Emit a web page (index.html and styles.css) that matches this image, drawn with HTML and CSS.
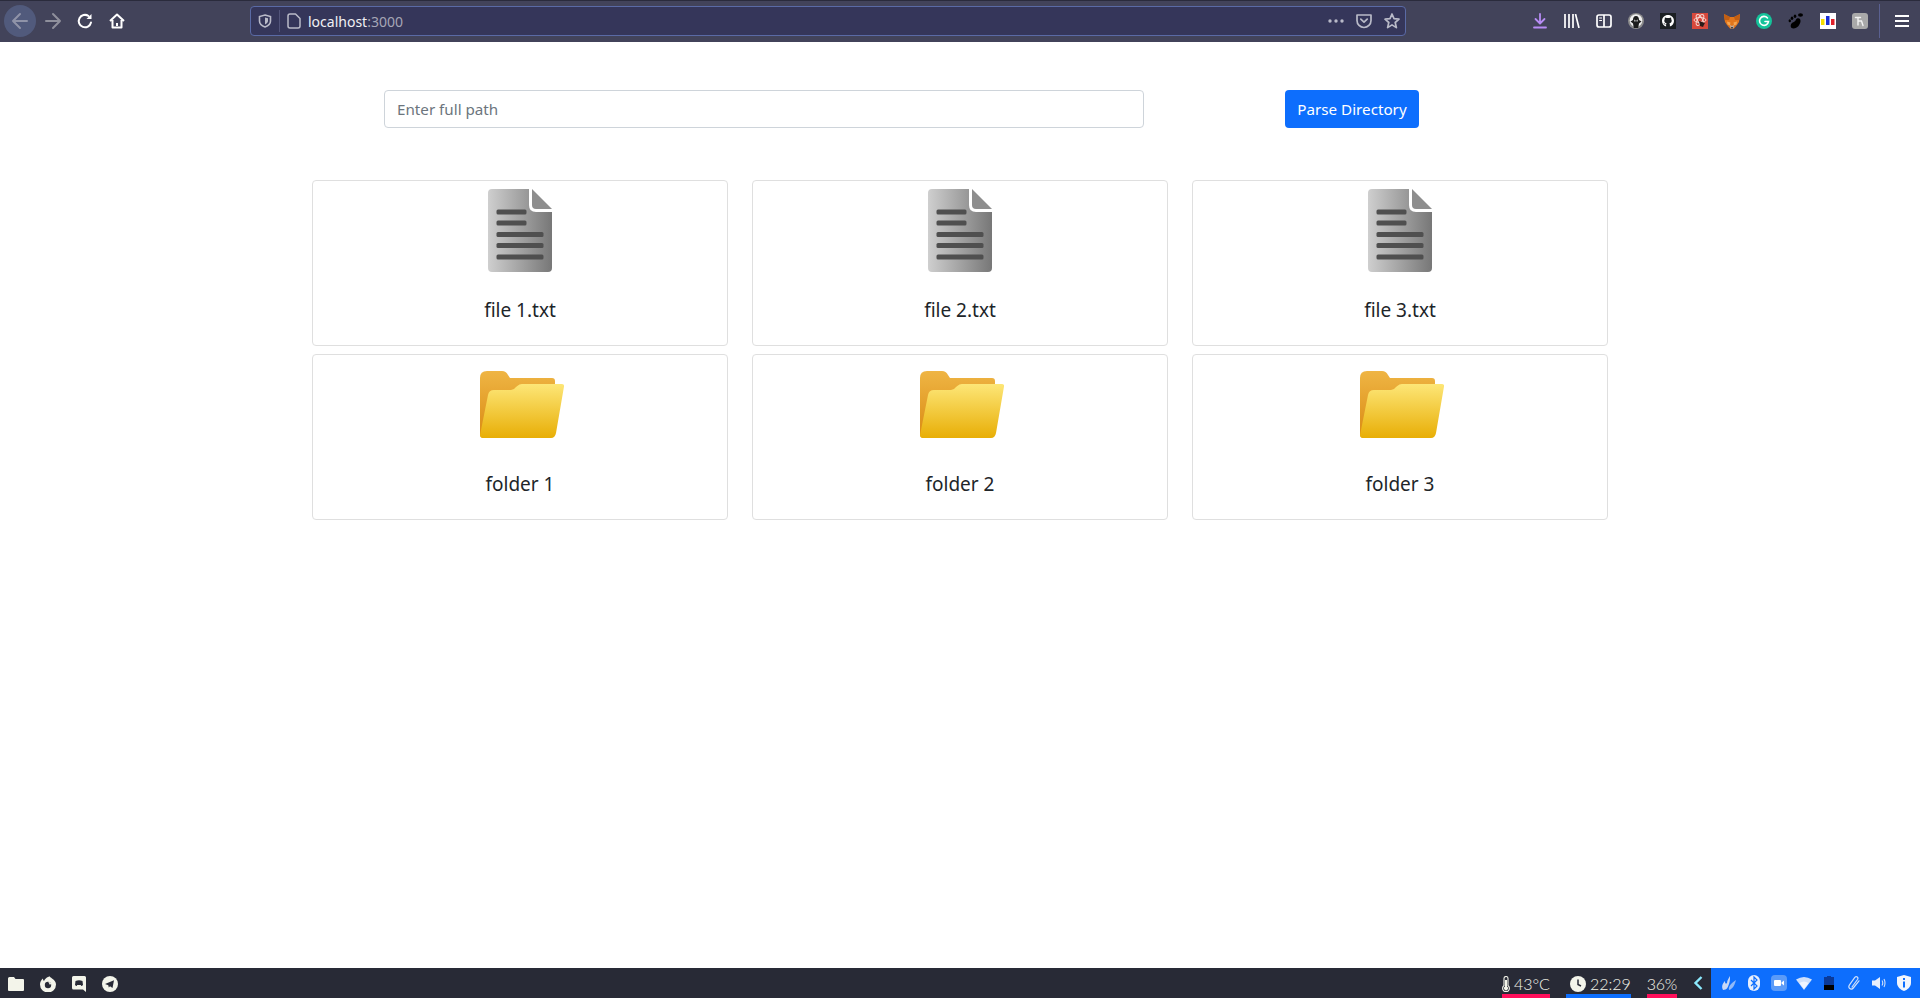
FILE: index.html
```html
<!DOCTYPE html>
<html lang="en">
<head>
    <meta charset="UTF-8">
    <meta name="viewport" content="width=device-width, initial-scale=1.0">
    <title>localhost:3000</title>
    <link rel="stylesheet" href="styles.css">
</head>
<body>

    <svg class="defs" width="0" height="0">
        <defs>
            <linearGradient id="fileBody" x1="0" y1="0" x2="1" y2="0">
                <stop offset="0" stop-color="#cfcfcf"/>
                <stop offset="1" stop-color="#777"/>
            </linearGradient>
            <linearGradient id="folderBack" x1="0" y1="0" x2="0" y2="1">
                <stop offset="0" stop-color="#efb544"/>
                <stop offset="1" stop-color="#d98a12"/>
            </linearGradient>
            <linearGradient id="folderFront" x1="0" y1="0" x2="0" y2="1">
                <stop offset="0" stop-color="#fde677"/>
                <stop offset="1" stop-color="#e8ae06"/>
            </linearGradient>
            <symbol id="file-icon" viewBox="0 0 100 100">
                <g transform="translate(18 8)">
                    <path d="M4 0H41V16Q41 23 48 23H64V79Q64 83 60 83H4Q0 83 0 79V4Q0 0 4 0Z" fill="url(#fileBody)"/>
                    <path d="M44 0L64 20H48Q44 20 44 16Z" fill="#8e8e8e"/>
                    <g fill="#4f4f4f">
                        <rect x="8.500" y="20.500" width="30" height="5" rx="1.500"/>
                        <rect x="8.500" y="31.500" width="30" height="5" rx="1.500"/>
                        <rect x="8.500" y="43" width="47" height="5" rx="1.500"/>
                        <rect x="8.500" y="54" width="47" height="5" rx="1.500"/>
                        <rect x="8.500" y="65.500" width="47" height="5" rx="1.500"/>
                    </g>
                </g>
            </symbol>
            <symbol id="folder-icon" viewBox="0 0 100 100">
                <g transform="translate(10 16)">
                    <path d="M7 0H22Q26 0 28 4L30 7H72Q75 7 75 10V60L4 67Q0 67 0 63V7Q0 0 7 0Z" fill="url(#folderBack)"/>
                    <path d="M0 64L8 24Q9 19 14 19H31Q34 19 36 16L38 14.500Q39 13 42 13H82Q84.500 13 84 15.500L76 62Q75 67 71 67H3Q0 67 0 64Z" fill="url(#folderFront)"/>
                </g>
            </symbol>
        </defs>
    </svg>

    <div class="browser-bar">
        <div class="nav-buttons">
            <span class="nav-btn back">
                <svg width="18" height="18" viewBox="0 0 18 18" fill="none" stroke="#8f93a8" stroke-width="2" stroke-linecap="round" stroke-linejoin="round"><path d="M16 9H2M9 2L2 9L9 16"/></svg>
            </span>
            <span class="nav-btn">
                <svg width="18" height="18" viewBox="0 0 18 18" fill="none" stroke="#8f909c" stroke-width="2" stroke-linecap="round" stroke-linejoin="round"><path d="M2 9H16M9 2L16 9L9 16"/></svg>
            </span>
            <span class="nav-btn">
                <svg width="16" height="16" viewBox="0 0 16 16" fill="none" stroke="#fff" stroke-width="2" stroke-linecap="round"><path d="M14 9.500A6.200 6.200 0 1 1 11.500 3"/><path d="M14.500 1V6H9.500" fill="#fff" stroke="none"/></svg>
            </span>
            <span class="nav-btn">
                <svg width="16" height="16" viewBox="0 0 16 16" fill="none" stroke="#fff" stroke-width="2" stroke-linejoin="round"><path d="M1 8L8 1.500L15 8M3.500 7V14.500H12.500V7"/><rect x="7" y="10" width="2" height="3" fill="#fff" stroke="none"/></svg>
            </span>
        </div>
        <div class="url-bar">
            <svg class="shield" width="14" height="14" viewBox="0 0 14 14" fill="none" stroke="#b9bac8" stroke-width="1.600"><path d="M7 1L12.500 2.500V7C12.500 10 10 12 7 13C4 12 1.500 10 1.500 7V2.500Z"/><path d="M7 3.500L10 4.300V7C10 8.500 8.500 9.800 7 10.500Z" fill="#b9bac8" stroke="none"/></svg>
            <span class="url-sep"></span>
            <svg class="page-icon" width="14" height="16" viewBox="0 0 14 16" fill="none" stroke="#b9bac8" stroke-width="1.500" stroke-linejoin="round"><path d="M3 1H8.500L13 5.500V13Q13 15 11 15H3Q1 15 1 13V3Q1 1 3 1Z"/></svg>
            <span class="url-text">localhost<span class="url-port">:3000</span></span>
            <span class="url-actions">
                <svg width="16" height="4" viewBox="0 0 16 4" fill="#b9bac8"><circle cx="2" cy="2" r="1.700"/><circle cx="8" cy="2" r="1.700"/><circle cx="14" cy="2" r="1.700"/></svg>
                <svg width="16" height="16" viewBox="0 0 16 16" fill="none" stroke="#b9bac8" stroke-width="1.700" stroke-linecap="round" stroke-linejoin="round"><path d="M1 2H15V7.500A7 7 0 0 1 1 7.500Z"/><path d="M4.800 6.200L8 9.200L11.200 6.200"/></svg>
                <svg width="16" height="16" viewBox="0 0 16 16" fill="none" stroke="#b9bac8" stroke-width="1.700" stroke-linejoin="round"><path d="M8 1L10 5.700L15 6.200L11.200 9.500L12.400 14.600L8 11.900L3.600 14.600L4.800 9.500L1 6.200L6 5.700Z"/></svg>
            </span>
        </div>
        <div class="ext-icons">
            <span class="ext">
                <svg width="14" height="16" viewBox="0 0 14 16" fill="none" stroke="#b78cf5" stroke-width="1.800" stroke-linecap="round" stroke-linejoin="round"><path d="M7 1V10M2.500 6L7 10.500L11.500 6"/><path d="M1 14.500H13"/></svg>
            </span>
            <span class="ext">
                <svg width="16" height="14" viewBox="0 0 16 14" stroke="#fff" stroke-width="1.700" fill="none"><path d="M1 0V14M5 0V14M9 0V14M11.500 0L15 14"/></svg>
            </span>
            <span class="ext">
                <svg width="16" height="14" viewBox="0 0 16 14" fill="none" stroke="#fff" stroke-width="1.700"><rect x="1" y="1" width="14" height="12" rx="2"/><path d="M8 1V13" stroke-width="1.700"/><path d="M3.200 4H6M3.200 6.500H6" stroke-width="1.200"/></svg>
            </span>
            <span class="ext">
                <svg width="16" height="16" viewBox="0 0 16 16"><circle cx="8" cy="8" r="8" fill="#8c8c8c"/><circle cx="8" cy="7.500" r="6.300" fill="#f0f0f0"/><path d="M8 3C5.800 3 5 5 5 7L2.500 8.500L5 10.500L5.800 15H10.200L11 10.500L13.500 8.500L11 7C11 5 10.200 3 8 3Z" fill="#1c1c1c"/><path d="M6.300 6.500L7.500 7.300V8.500H6.300ZM9.700 6.500L8.500 7.300V8.500H9.700Z" fill="#ddd"/></svg>
            </span>
            <span class="ext">
                <svg width="16" height="16" viewBox="0 0 16 16"><rect width="16" height="16" fill="#1b1f23"/><path d="M8 2C4.700 2 2 4.600 2 7.900C2 10.500 3.700 12.700 6.100 13.500V11.800C4.500 12.100 4.200 11 4 10.600C3.800 10.300 3.400 10 3.700 10C4.400 10 4.800 10.700 5 11C5.600 11.900 6 11.500 6.200 11.200C6.300 10.800 6.500 10.500 6.700 10.400C5.200 10.200 4.300 9.500 4.300 7.800C4.300 7.100 4.500 6.500 4.900 6.100C4.800 5.900 4.600 5.200 5 4.400C5.800 4.400 6.400 4.900 6.700 5.100C7.600 4.900 8.400 4.900 9.300 5.100C9.600 4.900 10.200 4.400 11 4.400C11.400 5.200 11.200 5.900 11.100 6.100C11.500 6.500 11.700 7.100 11.700 7.800C11.700 9.500 10.800 10.200 9.300 10.400C9.600 10.600 9.900 11.100 9.900 11.800V13.500C12.300 12.700 14 10.500 14 7.900C14 4.600 11.300 2 8 2Z" fill="#fff"/></svg>
            </span>
            <span class="ext">
                <svg width="16" height="16" viewBox="0 0 16 16"><rect width="16" height="16" fill="#d8493c"/><g fill="none" stroke="#f5d5cf" stroke-width="1"><ellipse cx="8" cy="7" rx="6" ry="2.500"/><ellipse cx="8" cy="7" rx="6" ry="2.500" transform="rotate(60 8 7)"/><ellipse cx="8" cy="7" rx="6" ry="2.500" transform="rotate(120 8 7)"/></g><path d="M7 8L13 10L11 14L8 13Z" fill="#2a1a18"/></svg>
            </span>
            <span class="ext">
                <svg width="16" height="16" viewBox="0 0 16 16"><path d="M0 1L6 4H10L16 1L15.500 6L15 9L13 12L10 15.500H6L3 12L1 9L.500 6Z" fill="#e2761b"/><path d="M0 1L6 4L5 7L.800 7Z M16 1L10 4L11 7L15.200 7Z" fill="#c25e12"/><path d="M3 8.500L6.500 9.500L6 12.500L3.500 11.500Z M13 8.500L9.500 9.500L10 12.500L12.500 11.500Z" fill="#f6a650"/><path d="M6 12L8 13L10 12L9.500 15.500H6.500Z" fill="#c0ad9e"/><path d="M7 14H9L8.500 15.500H7.500Z" fill="#333"/></svg>
            </span>
            <span class="ext">
                <svg width="16" height="16" viewBox="0 0 16 16"><circle cx="8" cy="8" r="8" fill="#15c39a"/><path d="M11.500 5A4.500 4.500 0 1 0 12.500 8.500H9" fill="none" stroke="#fff" stroke-width="1.600" stroke-linecap="round"/></svg>
            </span>
            <span class="ext">
                <svg width="16" height="16" viewBox="0 0 16 16" fill="#000"><path d="M5.500 15.500C2.500 15.500 2 12.500 3.500 10.500C5 8.500 7 9.500 8 6.500C9 4.500 13 4.500 12.500 8.500C12 11.500 9.500 15.500 5.500 15.500Z"/><ellipse cx="1.800" cy="7.800" rx="1.200" ry="1.500"/><ellipse cx="4" cy="5.200" rx="1.300" ry="1.700"/><ellipse cx="7" cy="3.200" rx="1.300" ry="1.700"/><ellipse cx="12.500" cy="2" rx="2.500" ry="1.800"/></svg>
            </span>
            <span class="ext">
                <svg width="16" height="16" viewBox="0 0 16 16"><rect width="16" height="16" fill="#fff"/><rect x="1" y="6" width="3.500" height="6" fill="#f5dc00"/><rect x="6" y="3" width="3.500" height="9" fill="#1a2fd6"/><rect x="11" y="6" width="3.500" height="6" fill="#e0202a"/></svg>
            </span>
            <span class="ext">
                <svg width="16" height="16" viewBox="0 0 16 16"><rect width="16" height="16" rx="3" fill="#a9a9a9"/><path d="M3.500 4.500H8.500M6 4.500V12M6 8H9.500L11 12.500" fill="none" stroke="#f2f2f2" stroke-width="1.400" stroke-linecap="round"/></svg>
            </span>
            <span class="ext-sep"></span>
            <span class="menu-btn">
                <svg width="14" height="12" viewBox="0 0 14 12" fill="#fff"><rect width="14" height="2"/><rect y="5" width="14" height="2"/><rect y="10" width="14" height="2"/></svg>
            </span>
        </div>
    </div>

    <div class="page">
        <div class="container">
            <form class="path-form">
                <input class="path-input" type="text" placeholder="Enter full path">
                <button class="button" type="button">Parse Directory</button>
            </form>
            <div class="items">
                <div class="item">
                    <svg class="item-icon"><use href="#file-icon"/></svg>
                    <p class="item-name">file 1.txt</p>
                </div>
                <div class="item">
                    <svg class="item-icon"><use href="#file-icon"/></svg>
                    <p class="item-name">file 2.txt</p>
                </div>
                <div class="item">
                    <svg class="item-icon"><use href="#file-icon"/></svg>
                    <p class="item-name">file 3.txt</p>
                </div>
                <div class="item">
                    <svg class="item-icon"><use href="#folder-icon"/></svg>
                    <p class="item-name">folder 1</p>
                </div>
                <div class="item">
                    <svg class="item-icon"><use href="#folder-icon"/></svg>
                    <p class="item-name">folder 2</p>
                </div>
                <div class="item">
                    <svg class="item-icon"><use href="#folder-icon"/></svg>
                    <p class="item-name">folder 3</p>
                </div>
            </div>
        </div>
    </div>

    <div class="taskbar">
        <div class="task-apps">
            <svg width="16" height="14" viewBox="0 0 16 14" fill="#f3f4ea"><path d="M0 1.500Q0 0 1.500 0H6L7.500 2H15Q16 2 16 3V13Q16 14 15 14H1Q0 14 0 13Z"/></svg>
            <svg width="16" height="16" viewBox="0 0 16 16"><path d="M8 1C9 1 9.500 0 9.500 0C9.500 1 11 1.500 12 2.500C14.500 4 16 6 16 8.500A8 8 0 0 1 0 8.500C0 6 1 4 3 2.500C3 4 3.500 4.500 4 5C5 3 6.500 1.500 8 1Z" fill="#f3f4ea"/><circle cx="8" cy="9" r="3.200" fill="#282a36"/><path d="M8 5.500L11.500 7L10 9Z" fill="#f3f4ea"/></svg>
            <svg width="14" height="16" viewBox="0 0 14 16"><path d="M1.500 0H12.500Q14 0 14 1.500V16L11 13.500H1.500Q0 13.500 0 12V1.500Q0 0 1.500 0Z" fill="#f3f4ea"/><path d="M3.500 5Q7 3.500 10.500 5L11 9Q10 10 9.200 10L8.800 9H5.200L4.800 10Q4 10 3 9Z" fill="#282a36"/></svg>
            <svg width="16" height="16" viewBox="0 0 16 16"><circle cx="8" cy="8" r="8" fill="#f3f4ea"/><path d="M3 8L12 4.200L10.500 12L8 10.200L6.800 11.400L6.300 9.300Z" fill="#282a36"/></svg>
        </div>
        <div class="task-status">
            <span class="status temp">
                <svg width="8" height="16" viewBox="0 0 8 16" fill="none" stroke="#f3f4ea" stroke-width="1.100"><path d="M2 9.500V2.500A2 2 0 0 1 6 2.500V9.500A3.400 3.400 0 1 1 2 9.500Z"/><path d="M3 4H5V10.500A2 2 0 1 1 3 10.500Z" fill="#f3f4ea" stroke="none"/></svg>
                43°C
            </span>
            <span class="status clock">
                <svg width="16" height="16" viewBox="0 0 16 16"><circle cx="8" cy="8" r="8" fill="#f3f4ea"/><path d="M8 3.500V8.500L11 10" fill="none" stroke="#282a36" stroke-width="1.500"/></svg>
                22:29
            </span>
            <span class="status mem">36%</span>
            <svg class="tray-toggle" width="10" height="14" viewBox="0 0 10 14" fill="none" stroke="#8be9fd" stroke-width="2.400"><path d="M8.500 1L2.500 7L8.500 13"/></svg>
            <div class="tray">
                <svg width="16" height="16" viewBox="0 0 16 16" fill="#c9d8f5"><path d="M2 15C0 11 2 8 4 6C4 9 5 9 6 8C6 5 8 3 9 1C9 4 9 6 8 9C7 12 6 15 2 15Z"/><path d="M8 15C7 12 10 8 15 5C14 9 12 14 8 15Z" opacity=".7"/></svg>
                <svg width="12" height="16" viewBox="0 0 12 16"><rect width="12" height="16" rx="6" fill="#e6eefc"/><path d="M3 5L9 11L6 14V2L9 5L3 11" fill="none" stroke="#0d6efd" stroke-width="1.200"/></svg>
                <svg width="16" height="16" viewBox="0 0 16 16"><rect width="16" height="16" rx="4" fill="#5b9bf8"/><rect x="3" y="5" width="7" height="6" rx="1" fill="#fff"/><path d="M10.500 7.500L13 5.500V10.500L10.500 8.500Z" fill="#fff"/></svg>
                <svg width="16" height="14" viewBox="0 0 16 14" fill="#cfe0fb"><path d="M0 3.500Q8 -1.500 16 3.500L8 14Z"/><path d="M3.500 7Q8 4 12.500 7L8 13Z" fill="#eef4ff"/></svg>
                <svg width="10" height="14" viewBox="0 0 10 14"><rect x="3" width="4" height="2" fill="#0a3a9a"/><rect y="1" width="10" height="8" fill="#0a3a9a"/><rect y="9" width="10" height="5" fill="#000"/></svg>
                <svg width="12" height="16" viewBox="0 0 12 16" fill="none" stroke="#cfe0fb" stroke-width="1.200" stroke-linecap="round"><path d="M4 12L9.500 4.500C10.800 2.500 8.500 0.500 6.800 2.300L1.500 9.800C-0.500 12.800 3 15.800 5.300 13L11 5.800"/></svg>
                <svg width="14" height="14" viewBox="0 0 14 14"><path d="M0 4.500H3L8 1V13L3 9.500H0Z" fill="#e6eefc"/><path d="M10 4.500Q11.500 7 10 9.500M12 3Q14 7 12 11" fill="none" stroke="#cfe0fb" stroke-width="1.100"/></svg>
                <svg width="14" height="16" viewBox="0 0 14 16"><path d="M7 0L14 2V8C14 12 10 15 7 16C4 15 0 12 0 8V2Z" fill="#f1f5fd"/><rect x="6" y="3" width="2" height="2" fill="#0d6efd"/><rect x="6" y="6.500" width="2" height="6" fill="#0d6efd"/></svg>
            </div>
        </div>
    </div>

</body>
</html>
```

FILE: styles.css
```css
* {
    box-sizing: border-box;
}
body {
    font-family: "Noto Sans", sans-serif;
    margin: 0;
    height: 100vh;
    overflow: hidden;
    display: flex;
    flex-direction: column;
    background-color: #fff;
    color: #212529;
}
.defs {
    position: absolute;
}

/* browser toolbar */
.browser-bar {
    height: 42px;
    flex-shrink: 0;
    display: flex;
    align-items: center;
    background-color: #42435a;
    box-shadow: inset 0 1px 0 #2a2b3c;
}
.nav-buttons {
    display: flex;
    align-items: center;
    width: 250px;
    padding-left: 4px;
}
.nav-btn {
    width: 32px;
    height: 32px;
    display: flex;
    align-items: center;
    justify-content: center;
}
.nav-btn.back {
    margin-right: 1px;
    border-radius: 50%;
    background-color: #515a7c;
}
.url-bar {
    width: 1156px;
    height: 30px;
    display: flex;
    align-items: center;
    padding: 0 5px 0 7px;
    background-color: #35365a;
    border: 1px solid #5a6aa5;
    border-radius: 4px;
}
.url-sep {
    width: 1px;
    height: 22px;
    margin: 0 7px;
    background-color: #52547a;
}
.url-text {
    margin-left: 7px;
    font-size: 14px;
    color: #f0f0f4;
}
.url-port {
    color: #a5a6b6;
}
.url-actions {
    margin-left: auto;
    display: flex;
    align-items: center;
    gap: 12px;
}
.ext-icons {
    flex: 1;
    display: flex;
    align-items: center;
    padding-left: 118px;
}
.ext {
    width: 32px;
    display: flex;
    justify-content: center;
}
.ext-sep {
    width: 1px;
    height: 34px;
    margin-left: 3px;
    background-color: #5a6090;
}
.menu-btn {
    margin-left: 15px;
    display: flex;
}

/* page content */
.page {
    flex: 1;
}
.container {
    width: 1320px;
    margin: 0 auto;
    padding: 48px 12px 0;
}
.path-form {
    display: flex;
    align-items: center;
    padding-left: 72px;
    margin-bottom: 52px;
}
.path-input {
    width: 760px;
    height: 38px;
    padding: 6px 12px;
    font-family: inherit;
    font-size: 15.200px;
    border: 1px solid #ced4da;
    border-radius: 4px;
    outline: none;
}
.path-input::placeholder {
    color: #6c757d;
}
.button {
    width: 134px;
    margin-left: 141px;
    height: 38px;
    padding: 0;
    font-family: inherit;
    font-size: 15.200px;
    color: #fff;
    background-color: #0d6efd;
    border: none;
    border-radius: 4px;
    cursor: pointer;
}
.items {
    display: grid;
    grid-template-columns: repeat(3, 416px);
    column-gap: 24px;
    row-gap: 8px;
}
.item {
    height: 166px;
    border: 1px solid #dfdfdf;
    border-radius: 4px;
    display: flex;
    flex-direction: column;
    align-items: center;
}
.item-icon {
    width: 100px;
    height: 100px;
    flex-shrink: 0;
}
.item-name {
    margin: 14px 0 0;
    font-size: 19px;
    line-height: 30px;
}

/* desktop panel */
.taskbar {
    height: 30px;
    flex-shrink: 0;
    display: flex;
    align-items: center;
    justify-content: space-between;
    background-color: #282a36;
}
.task-apps {
    display: flex;
    align-items: center;
    gap: 16px;
    padding: 2px 0 0 8px;
}
.task-status {
    height: 100%;
    display: flex;
    align-items: center;
    font-family: Lato, sans-serif;
    font-size: 16px;
    font-weight: 300;
    color: #f3f4ea;
}
.status {
    height: 100%;
    display: flex;
    align-items: center;
    padding-top: 5px;
    margin-right: 16px;
    border-bottom: 4px solid #ff0f5b;
}
.status.temp {
    gap: 4px;
}
.status.clock {
    gap: 4px;
    padding-left: 4px;
    border-bottom-color: #0d6efd;
}
.status.mem {
    letter-spacing: -0.300px;
}
.tray-toggle {
    margin-right: 8px;
}
.tray {
    width: 209px;
    height: 100%;
    display: grid;
    grid-template-columns: repeat(8, 25px);
    align-items: center;
    justify-items: center;
    padding-left: 5px;
    background-color: #0d6efd;
}
```
